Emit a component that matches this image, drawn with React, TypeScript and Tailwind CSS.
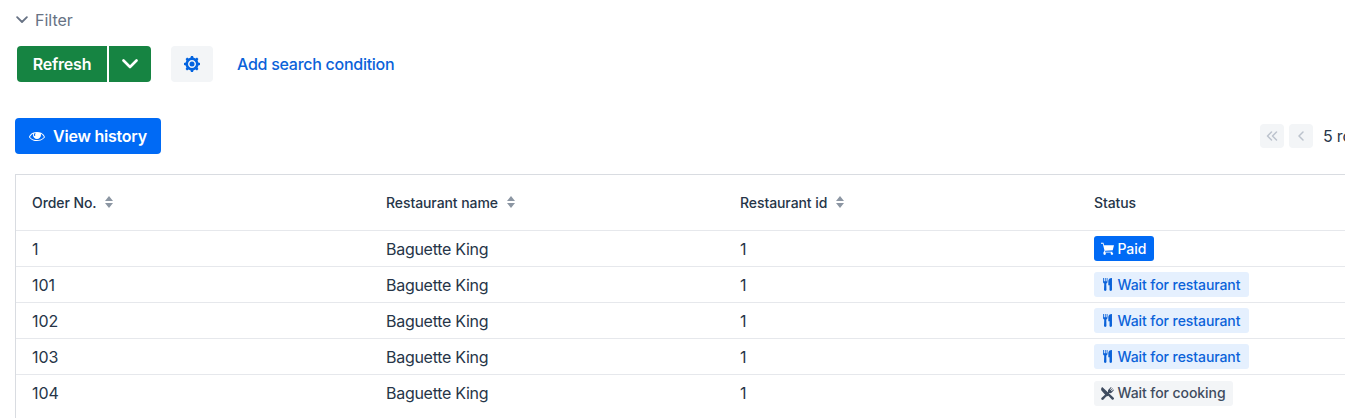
import React from 'react';

type IconProps = { className?: string };

const Cog = ({ className }: IconProps) => (
  <svg viewBox="0 0 16 16" fill="currentColor" className={className}>
    <path d="M16 9v-2l-1.7-0.6c-0.2-0.6-0.4-1.2-0.7-1.8l0.8-1.6-1.4-1.4-1.6 0.8c-0.5-0.3-1.1-0.6-1.8-0.7l-0.6-1.7h-2l-0.6 1.7c-0.6 0.2-1.2 0.4-1.7 0.7l-1.6-0.8-1.5 1.5 0.8 1.6c-0.3 0.5-0.5 1.1-0.7 1.7l-1.7 0.6v2l1.7 0.6c0.2 0.6 0.4 1.2 0.7 1.8l-0.8 1.6 1.4 1.4 1.6-0.8c0.5 0.3 1.1 0.6 1.8 0.7l0.6 1.7h2l0.6-1.7c0.6-0.2 1.2-0.4 1.8-0.7l1.6 0.8 1.4-1.4-0.8-1.6c0.3-0.5 0.6-1.1 0.7-1.8l1.7-0.6zM8 12c-2.2 0-4-1.8-4-4s1.8-4 4-4 4 1.8 4 4-1.8 4-4 4z" />
    <circle cx="8" cy="8" r="2.5" />
  </svg>
);

const Eye = ({ className }: IconProps) => (
  <svg viewBox="0 0 16 16" fill="currentColor" className={className}>
    <path d="M8 3.9c-6.7 0-8 5.1-8 5.1s2.2 4.1 7.9 4.1 8.1-4 8.1-4-1.3-5.2-8-5.2zM5.3 5.4c0.5-0.3 1.3-0.3 1.3-0.3s-0.5 0.9-0.5 1.6c0 0.7 0.2 1.1 0.2 1.1l-1.1 0.2c0 0-0.3-0.5-0.3-1.2 0-0.8 0.4-1.4 0.4-1.4zM7.9 12.1c-4.1 0-6.2-2.3-6.8-3.2 0.3-0.7 1.1-2.2 3.1-3.2-0.1 0.4-0.2 0.8-0.2 1.3 0 2.2 1.8 4 4 4s4-1.8 4-4c0-0.5-0.1-0.9-0.2-1.3 2 0.9 2.8 2.5 3.1 3.2-0.7 0.9-2.8 3.2-7 3.2z" />
  </svg>
);

const Cart = ({ className }: IconProps) => (
  <svg viewBox="0 0 16 16" fill="currentColor" className={className}>
    <path d="M14 13.1v-1.1h-9.4l0.6-1.1 9.2-0.9 1.6-6h-12.3l-0.7-3h-3v1h2.2l2.1 8.4-1.3 2.6v1.5c0 0.8 0.7 1.5 1.5 1.5s1.5-0.7 1.5-1.5-0.7-1.5-1.5-1.5h7.5v1.5c0 0.8 0.7 1.5 1.5 1.5s1.5-0.7 1.5-1.5c0-0.7-0.4-1.2-1-1.4z" />
  </svg>
);

const Cutlery = ({ className }: IconProps) => (
  <svg viewBox="0 0 16 16" fill="currentColor" className={className}>
    <path d="M8 0v4.500c0 1.100-.6 1.900-1.500 2.300l.2 7.700c0 .8-.6 1.500-1.500 1.500s-1.500-.7-1.500-1.500L4 6.800C3.100 6.400 2.500 5.600 2.500 4.500V0h1v4h1.250V0h1v4H7V0zM13.500 0v14.500c0 .8-.6 1.500-1.500 1.500s-1.500-.7-1.500-1.500V9H9V4c0-2.500 1.500-4 4.500-4z" />
  </svg>
);

const CrossCutlery = ({ className }: IconProps) => (
  <svg viewBox="0 0 16 16" fill="currentColor" className={className}>
    <path d="M1.500 0L16 13.500c.3 1.300-1 2.600-2.300 2.300L9 10.800l-2 .8L.5 4.200C-.3 2.700.2 1 1.500 0z" />
    <path d="M12.300 0l.7.700-2 2.300.7.700L14 1.500l.6.600L12.300 4.400l.7.700 2.300-2 .7.700-2.700 3c-.8.8-1.900 1-2.900.6L3.100 15.400c-.7.700-1.700.8-2.400.1s-.6-1.700.1-2.400L8.700 6c-.4-1-.2-2.100.6-2.900z" />
  </svg>
);

const Chevron = ({ className }: IconProps) => (
  <svg viewBox="0 0 16 10" fill="none" stroke="currentColor" strokeLinecap="round" strokeLinejoin="round" className={className}>
    <path d="M1.500 1.500L8 8l6.500-6.500" />
  </svg>
);

const Sorter = () => (
  <svg viewBox="0 0 8 12" fill="#8c96a3" className="mb-0.5 h-3 w-2">
    <path d="M4 0l4 5H0zM0 7h8l-4 5z" />
  </svg>
);

const HeaderCell = ({ text }: { text: string }) => (
  <div className="flex w-[354px] shrink-0 items-center gap-[9px] pl-4">
    <span className="tracking-[-0.08px]">{text}</span>
    {text !== 'Status' && <Sorter />}
  </div>
);

type Status = 'paid' | 'restaurant' | 'cooking';

const Badge = ({ status }: { status: Status }) => {
  const base =
    'flex h-[25px] items-center gap-[3.5px] rounded-[3px] pl-[7px] text-sm font-medium tracking-[-0.08px] whitespace-nowrap';
  if (status === 'paid')
    return (
      <span className={`${base} w-[60px] bg-[#006af5] text-white`}>
        <Cart className="size-[13px]" />
        <span>Paid</span>
      </span>
    );
  if (status === 'restaurant')
    return (
      <span className={`${base} w-[155px] bg-[#e5f0fe] text-[#0b62d9]`}>
        <Cutlery className="size-[13px]" />
        <span>Wait for restaurant</span>
      </span>
    );
  return (
    <span className={`${base} w-[139px] bg-[#f3f5f7] text-[#3f4c60]`}>
      <CrossCutlery className="size-[13px]" />
      <span>Wait for cooking</span>
    </span>
  );
};

const orders: { no: string; status: Status }[] = [
  { no: '1', status: 'paid' },
  { no: '101', status: 'restaurant' },
  { no: '102', status: 'restaurant' },
  { no: '103', status: 'restaurant' },
  { no: '104', status: 'cooking' },
];

export default function App() {
  return (
    <div className="flex h-[418px] w-full flex-col overflow-hidden bg-white pl-[15px] font-['Inter',sans-serif] text-base text-[#263548]">
      <div className="flex h-10 items-center gap-[7px] text-[#677284]">
        <Chevron className="ml-px h-[7.5px] w-3 stroke-[2.4]" />
        <span>Filter</span>
      </div>

      <div className="mt-1.5 ml-0.5 flex h-9 shrink-0 items-center">
        <button className="h-9 w-[90px] rounded-l-[4px] bg-[#168442] font-semibold text-white">
          <span className="tracking-[-0.2px]">Refresh</span>
        </button>
        <button className="ml-0.5 flex h-9 w-[42px] items-center justify-center rounded-r-[4px] bg-[#168442] text-white">
          <Chevron className="h-[10px] w-4 stroke-[2.6]" />
        </button>
        <button className="ml-5 flex h-9 w-[42px] items-center justify-center rounded-[4px] bg-[#f3f5f7] text-[#0464e0]">
          <Cog className="size-4" />
        </button>
        <span className="ml-6 font-medium tracking-[-0.27px] text-[#0b62d9]">Add search condition</span>
      </div>

      <div className="mt-9 flex h-9 shrink-0 items-center">
        <button className="flex h-9 w-[146px] shrink-0 items-center gap-2 rounded-[4px] bg-[#006af5] pl-[14px] font-semibold whitespace-nowrap text-white">
          <Eye className="size-4 shrink-0" />
          <span className="tracking-[-0.22px]">View history</span>
        </button>
        <div className="ml-[1099px] flex shrink-0 items-center gap-[5px] whitespace-nowrap">
          <span className="flex size-6 items-center justify-center rounded-[4px] bg-[#f3f5f7] text-[#bcc3cd]">
            <svg viewBox="0 0 12 10" fill="none" stroke="currentColor" strokeWidth="1.500" strokeLinecap="round" strokeLinejoin="round" className="h-[10px] w-3">
              <path d="M5.500 1L1.500 5l4 4M10.500 1l-4 4 4 4" />
            </svg>
          </span>
          <span className="flex size-6 items-center justify-center rounded-[4px] bg-[#f3f5f7] text-[#bcc3cd]">
            <svg viewBox="0 0 6 10" fill="none" stroke="currentColor" strokeWidth="1.500" strokeLinecap="round" strokeLinejoin="round" className="h-[10px] w-1.5">
              <path d="M5 1L1 5l4 4" />
            </svg>
          </span>
          <span className="ml-[5px] tracking-[-0.2px]">5 rows</span>
        </div>
      </div>

      <div className="mt-5 flex w-[1500px] grow flex-col border-t border-l border-[#d9dce1]">
        <div className="flex h-14 shrink-0 border-b border-[#e6e8ec] text-sm font-medium">
          <HeaderCell text="Order No." />
          <HeaderCell text="Restaurant name" />
          <HeaderCell text="Restaurant id" />
          <HeaderCell text="Status" />
        </div>
        {orders.map((o) => (
          <div key={o.no} className="flex h-9 shrink-0 items-center border-b border-[#e6e8ec] last:border-b-0">
            <div className="w-[354px] pl-4">{o.no}</div>
            <div className="w-[354px] pl-4 tracking-[-0.28px]">Baguette King</div>
            <div className="w-[354px] pl-4">1</div>
            <div className="flex w-[354px] pl-4">
              <Badge status={o.status} />
            </div>
          </div>
        ))}
      </div>
    </div>
  );
}
